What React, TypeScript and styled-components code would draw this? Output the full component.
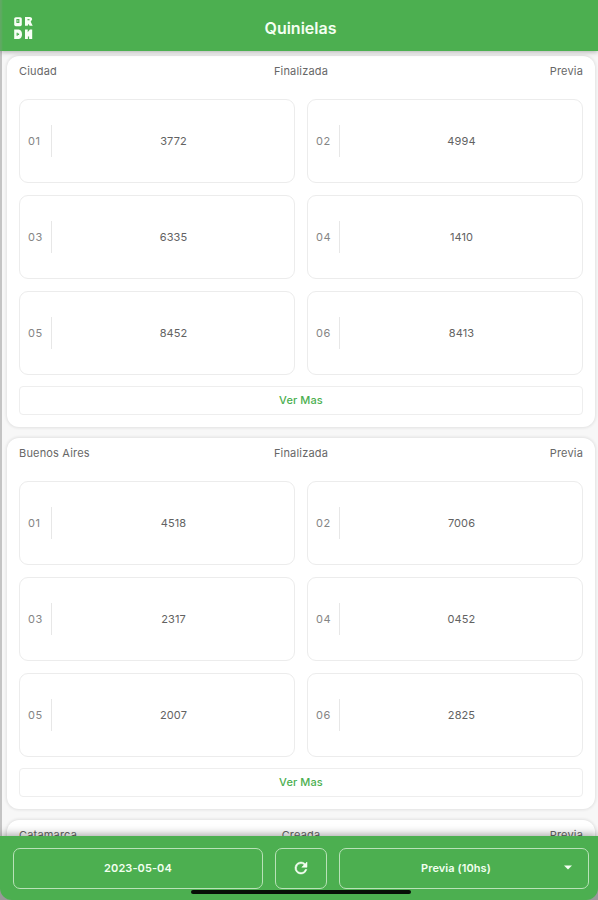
import React from 'react';
import styled, { createGlobalStyle } from 'styled-components';

const Global = createGlobalStyle`
  * { box-sizing: border-box; }
  body { margin: 0; background: #c4c4c4; font-family: Inter, "Liberation Sans", sans-serif; }
`;

const Screen = styled.div`
  width: 598px;
  height: 900px;
  overflow: hidden;
  display: flex;
  flex-direction: column;
  background: linear-gradient(90deg, #c4c4c4 2px, #f7f7f7 2px);
`;

const Header = styled.header`
  flex: 0 0 51px;
  display: grid;
  grid-template-columns: 46px 1fr 42px;
  align-items: center;
  padding: 4px 0 0 0;
  background: linear-gradient(90deg, #60a863 1px, #4caf50 3px);
  box-shadow: 0 1px 5px rgba(0, 0, 0, 0.3);
  z-index: 1;
`;

const LogoMark = styled.svg`
  width: 20px;
  height: 24px;
  margin-left: 13px;
`;

const Title = styled.h1`
  margin: 0;
  text-align: center;
  font-size: 16px;
  line-height: 22px;
  font-weight: 600;
  letter-spacing: 0;
  color: #f4fff2;
  padding-right: 1px;
`;

const List = styled.main`
  flex: 1;
  min-height: 0;
  overflow: hidden;
  display: flex;
  flex-direction: column;
  gap: 11px;
  padding: 5px 3px 0 7px;
`;

const Card = styled.section`
  flex: 0 0 371px;
  background: #fff;
  border-radius: 12px;
  padding: 0 12px;
  box-shadow: 0 0 3px 1px rgba(0, 0, 0, 0.09);
`;

const CardHeader = styled.div`
  display: grid;
  grid-template-columns: 1fr 1fr 1fr;
  height: 43px;
  padding-top: 7px;
  font-size: 11px;
  line-height: 16px;
  letter-spacing: 0.18px;
  color: #676767;

  span:nth-child(2) { text-align: center; }
  span:nth-child(3) { text-align: right; }
`;

const Numbers = styled.div`
  display: grid;
  grid-template-columns: 1fr 1fr;
  grid-auto-rows: 84px;
  gap: 12px;
`;

const Cell = styled.div`
  display: flex;
  align-items: center;
  border: 1px solid #ececec;
  border-radius: 9px;
  color: #626262;
  font-size: 11px;
  letter-spacing: 0.1px;
`;

const Position = styled.span`
  width: 32px;
  height: 32px;
  padding-left: 8px;
  line-height: 32px;
  letter-spacing: 0.5px;
  color: #858585;
  border-right: 1px solid #e7e7e7;
`;

const Value = styled.span`
  flex: 1;
  text-align: center;
  padding-left: 1px;
`;

const MoreButton = styled.button`
  display: block;
  width: 100%;
  height: 29px;
  margin-top: 11px;
  padding: 0;
  border: 1px solid #eee;
  border-radius: 4px;
  background: #fff;
  color: #4caf50;
  font: 500 11px/27px Inter, sans-serif;
  letter-spacing: 0.1px;
`;

const BottomBar = styled.footer`
  flex: 0 0 64px;
  background: linear-gradient(#4caf50 40px, #999 40px);
  box-shadow: 0 -1px 9px rgba(0, 0, 0, 0.4);
  z-index: 1;
`;

const Controls = styled.div`
  position: relative;
  height: 64px;
  display: grid;
  grid-template-columns: 250px 52px 250px;
  column-gap: 12px;
  padding: 12px 0 0 13px;
  background: #4caf50;
  border-radius: 0 0 12px 12px;
`;

const Control = styled.button`
  height: 41px;
  padding: 0 0 2px;
  display: flex;
  align-items: center;
  justify-content: center;
  border: 1px solid #b9e2b8;
  border-radius: 7px;
  background: transparent;
  color: #f2fff0;
  font: 600 11px/16px Inter, sans-serif;
  letter-spacing: 0.08px;
`;

const SelectLabel = styled.span`
  flex: 1;
  padding-left: 8px;
  text-align: center;
`;

const Caret = styled.svg`
  width: 8px;
  height: 5px;
  margin-right: 16px;
`;

const HomeIndicator = styled.div`
  position: absolute;
  left: 191px;
  bottom: 6px;
  width: 220px;
  height: 4px;
  border-radius: 2px;
  background: #060e06;
`;

const results = [
  { city: 'Ciudad', state: 'Finalizada', values: ['3772', '4994', '6335', '1410', '8452', '8413'] },
  { city: 'Buenos Aires', state: 'Finalizada', values: ['4518', '7006', '2317', '0452', '2007', '2825'] },
  { city: 'Catamarca', state: 'Creada', values: [] as string[] },
];

export default function App() {
  return (
    <>
      <Global />
      <Screen>
        <Header>
          <LogoMark viewBox="0 0 20 24" aria-hidden="true">
            <g fill="#f8fff6">
              <rect x="1.2" y="1.2" width="7.6" height="9" rx="1.6" />
              <path d="M12 .9h5q2.3.3 2.2 2.4l-1.5 2.5 2 4h-3.2l-1-2-.8 2H12z" />
              <path d="M1.2 13.5h4.5q3.3.7 3.3 4.7t-3.2 4.8H1.2z" />
              <path d="M12 13.5h2.7v2.8l2.2-2.8h2.3V23H12z" />
            </g>
            <g stroke="#4caf50" strokeWidth="1.2" fill="none">
              <path d="M4 3.5h1.8v3H4z" />
              <path d="M14.5 3.7h2" />
              <path d="M4.2 16.8v3M5.5 17.5v1.5" />
              <path d="M15.5 20.5v3" />
            </g>
          </LogoMark>
          <Title>Quinielas</Title>
        </Header>
        <List>
          {results.map(({ city, state, values }) => (
            <Card key={city}>
              <CardHeader>
                <span>{city}</span>
                <span>{state}</span>
                <span>Previa</span>
              </CardHeader>
              {values.length > 0 && (
                <>
                  <Numbers>
                    {values.map((value, i) => (
                      <Cell key={value}>
                        <Position>{`0${i + 1}`}</Position>
                        <Value>{value}</Value>
                      </Cell>
                    ))}
                  </Numbers>
                  <MoreButton>Ver Mas</MoreButton>
                </>
              )}
            </Card>
          ))}
        </List>
        <BottomBar>
          <Controls>
            <Control>2023-05-04</Control>
            <Control aria-label="Actualizar">
              <svg width="18" height="18" viewBox="0 0 24 24" fill="#f5fff3" aria-hidden="true">
                <path d="M17.65 6.35A7.96 7.96 0 0 0 12 4a8 8 0 1 0 7.73 10h-2.08A6 6 0 1 1 12 6c1.66 0 3.14.69 4.22 1.78L13 11h7V4z" stroke="#f5fff3" strokeWidth=".7" />
              </svg>
            </Control>
            <Control>
              <SelectLabel>Previa (10hs)</SelectLabel>
              <Caret viewBox="0 0 8 5" aria-hidden="true">
                <path d="M0 .5h8l-4 4z" fill="#f5fff3" />
              </Caret>
            </Control>
            <HomeIndicator />
          </Controls>
        </BottomBar>
      </Screen>
    </>
  );
}
